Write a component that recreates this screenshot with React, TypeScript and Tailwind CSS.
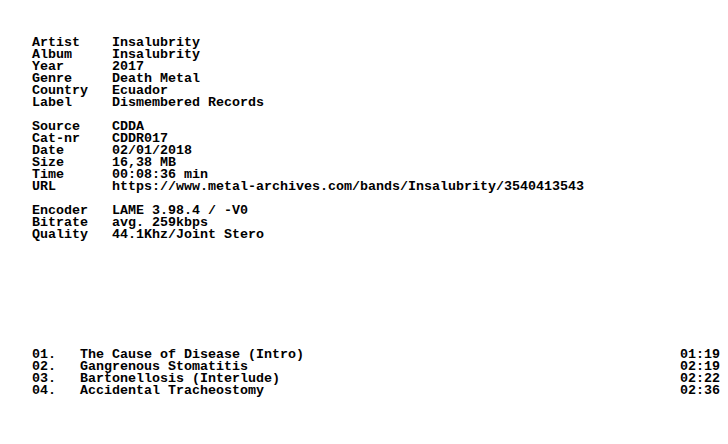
import React from "react";

const groups: [string, string][][] = [
  [
    ["Artist", "Insalubrity"],
    ["Album", "Insalubrity"],
    ["Year", "2017"],
    ["Genre", "Death Metal"],
    ["Country", "Ecuador"],
    ["Label", "Dismembered Records"],
  ],
  [
    ["Source", "CDDA"],
    ["Cat-nr", "CDDR017"],
    ["Date", "02/01/2018"],
    ["Size", "16,38 MB"],
    ["Time", "00:08:36 min"],
    ["URL", "https://www.metal-archives.com/bands/Insalubrity/3540413543"],
  ],
  [
    ["Encoder", "LAME 3.98.4 / -V0"],
    ["Bitrate", "avg. 259kbps"],
    ["Quality", "44.1Khz/Joint Stero"],
  ],
];

const tracks: [string, string, string][] = [
  ["01.", "The Cause of Disease (Intro)", "01:19"],
  ["02.", "Gangrenous Stomatitis", "02:19"],
  ["03.", "Bartonellosis (Interlude)", "02:22"],
  ["04.", "Accidental Tracheostomy", "02:36"],
];

export default function App() {
  return (
    <div
      className="w-[728px] h-[444px] bg-white text-black font-bold text-[13.33px] leading-[12px] pt-[37px] pl-[32px] pr-[8px] whitespace-pre overflow-hidden"
      style={{ fontFamily: '"Liberation Mono", "DejaVu Sans Mono", monospace' }}
    >
      <div className="flex flex-col gap-[12px]">
        {groups.map((g, gi) => (
          <div key={gi} className="flex flex-col">
            {g.map(([k, v]) => (
              <div key={k} className="flex h-[12px]">
                <span className="w-[80px] shrink-0">{k}</span>
                <span>{v}</span>
              </div>
            ))}
          </div>
        ))}
      </div>
      <div className="flex flex-col mt-[108px]">
        {tracks.map(([n, t, d]) => (
          <div key={n} className="flex h-[12px]">
            <span className="w-[48px] shrink-0">{n}</span>
            <span className="flex-1">{t}</span>
            <span>{d}</span>
          </div>
        ))}
      </div>
    </div>
  );
}
